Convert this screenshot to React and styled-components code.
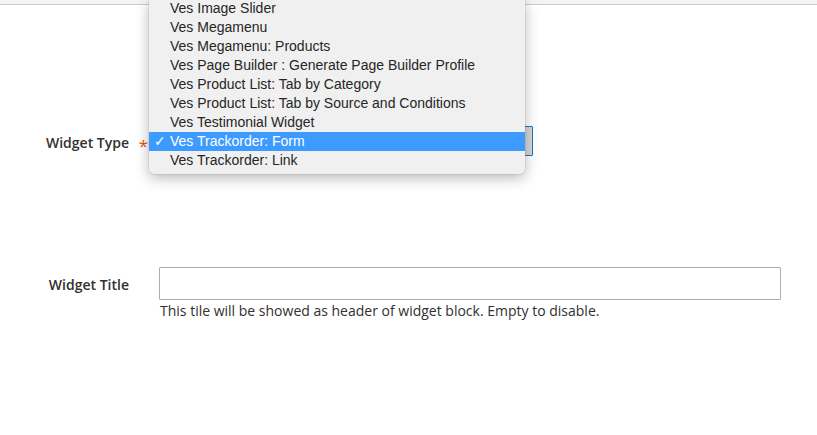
import React from "react";
import styled, { createGlobalStyle } from "styled-components";

const GlobalStyle = createGlobalStyle`
  html, body {
    margin: 0;
    padding: 0;
    background: #fff;
  }
  body {
    font-family: "Open Sans", "Liberation Sans", sans-serif;
    color: #303030;
  }
`;

const Page = styled.div`
  position: relative;
  width: 817px;
  height: 435px;
  overflow: hidden;
  background: #fff;
`;

const TopBar = styled.div`
  height: 4px;
  background: #f4f4f4;
  border-bottom: 1px solid #cccccc;
`;

const Form = styled.div`
  display: flex;
  flex-direction: column;
  padding-top: 121px;
  gap: 111px;
`;

const Field = styled.div`
  display: grid;
  grid-template-columns: 159px 1fr;
  align-items: ${(p) => (p.$top ? "start" : "center")};
`;

const Label = styled.label`
  position: relative;
  text-align: right;
  padding-right: 30px;
  font-size: 14px;
  font-weight: 600;
  color: #303030;
  line-height: 20px;
  padding-top: ${(p) => (p.$top ? "8px" : "3px")};

  ${(p) =>
    p.$required &&
    `
    &::after {
      content: "*";
      position: absolute;
      right: 11px;
      top: 6px;
      color: #eb5202;
      font-size: 17px;
      font-weight: 400;
    }
  `}
`;

const Control = styled.div`
  display: flex;
  flex-direction: column;
`;

const SelectBox = styled.div`
  width: 374px;
  height: 30px;
  box-sizing: border-box;
  border: 1px solid #1979c3;
  border-radius: 1px;
  background: #d6d6d6;
`;

const TextInput = styled.input`
  width: 622px;
  height: 33px;
  box-sizing: border-box;
  border: 1px solid #adadad;
  border-radius: 1px;
  padding: 0 10px;
  font-family: inherit;
  font-size: 14px;
  outline: none;
  margin: 0;
`;

const Note = styled.div`
  font-size: 14px;
  line-height: 20px;
  color: #303030;
  padding-top: 1px;
  padding-left: 1px;
`;

const Menu = styled.ul`
  position: absolute;
  left: 149px;
  top: -1px;
  width: 376px;
  margin: 0;
  padding: 0 0 4px;
  list-style: none;
  background: #f0f0f0;
  border-radius: 0 0 5px 5px;
  box-shadow: 0 4px 14px rgba(0, 0, 0, 0.28), 0 0 0 0.5px rgba(0, 0, 0, 0.12);
  font-family: "Liberation Sans", "DejaVu Sans", sans-serif;
  font-size: 14px;
`;

const MenuItem = styled.li`
  position: relative;
  height: 19px;
  line-height: 19px;
  padding-left: 21px;
  white-space: nowrap;
  color: ${(p) => (p.$selected ? "#fff" : "#262626")};
  background: ${(p) => (p.$selected ? "#3d9bff" : "transparent")};
`;

const Check = styled.span`
  position: absolute;
  left: 5px;
  top: 0;
  font-family: "DejaVu Sans", sans-serif;
  font-size: 14px;
  font-weight: 700;
`;

const options = [
  "Ves Image Slider",
  "Ves Megamenu",
  "Ves Megamenu: Products",
  "Ves Page Builder : Generate Page Builder Profile",
  "Ves Product List: Tab by Category",
  "Ves Product List: Tab by Source and Conditions",
  "Ves Testimonial Widget",
  "Ves Trackorder: Form",
  "Ves Trackorder: Link",
];

const selected = "Ves Trackorder: Form";

export default function App() {
  return (
    <Page>
      <GlobalStyle />
      <TopBar />
      <Form>
        <Field>
          <Label $required>Widget Type</Label>
          <Control>
            <SelectBox />
          </Control>
        </Field>
        <Field $top>
          <Label $top>Widget Title</Label>
          <Control>
            <TextInput type="text" />
            <Note>
              This tile will be showed as header of widget block. Empty to
              disable.
            </Note>
          </Control>
        </Field>
      </Form>
      <Menu>
        {options.map((o) => (
          <MenuItem key={o} $selected={o === selected}>
            {o === selected && <Check>✓</Check>}
            {o}
          </MenuItem>
        ))}
      </Menu>
    </Page>
  );
}
